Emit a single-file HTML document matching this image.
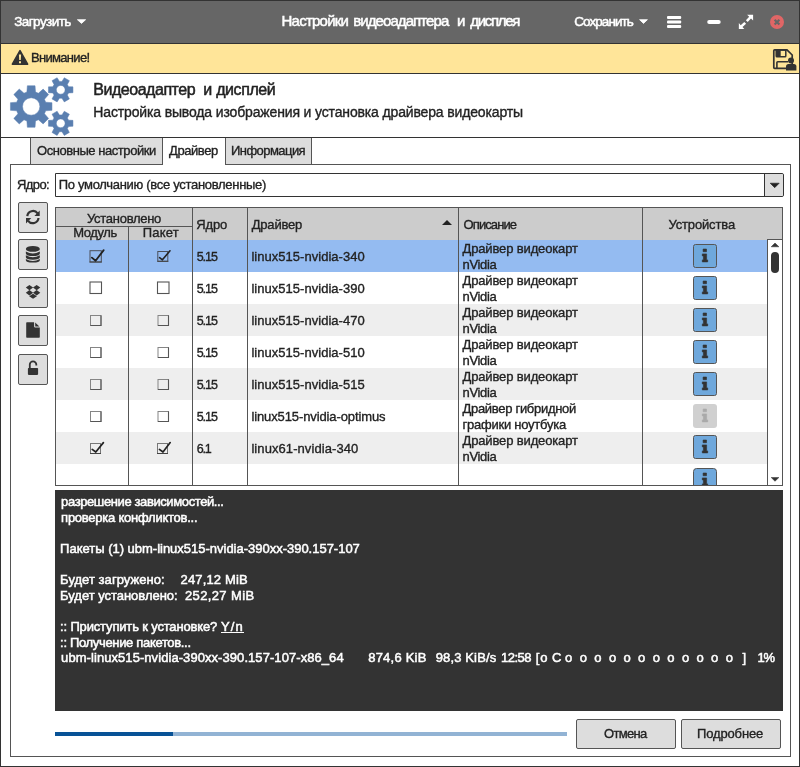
<!DOCTYPE html>
<html lang="ru">
<head>
<meta charset="utf-8">
<title>Настройки видеоадаптера и дисплея</title>
<style>
html,body{margin:0;padding:0;}
body{width:800px;height:767px;position:relative;overflow:hidden;background:#fff;font-family:"Liberation Sans",sans-serif;}
.a{position:absolute;box-sizing:border-box;}
.t{position:absolute;white-space:nowrap;font-family:"Liberation Sans",sans-serif;-webkit-text-stroke:0.35px;}
#txt{position:absolute;left:0;top:0;width:800px;height:767px;will-change:transform;}
.win{left:0;top:0;width:800px;height:767px;border:1px solid #333;}
.titlebar{left:1px;top:1px;width:798px;height:42px;background:#666;}
.hl{background:#333;height:1px;left:1px;width:798px;}
.warn{left:1px;top:44px;width:798px;height:29px;background:#ffe599;}
.tab{top:138px;height:27px;background:#ddd;border:1px solid #555;border-top:none;}
.panel{left:10px;top:164px;width:781px;height:593px;border:1px solid #555;}
.combo{left:55px;top:173px;width:729px;height:24px;border:1px solid #333;background:#fff;border-radius:0 2px 2px 0;}
.combobtn{left:764px;top:174px;width:19px;height:22px;background:#ddd;border-left:1px solid #333;border-radius:0 2px 2px 0;}
.tb{left:18px;width:30px;height:31px;background:#ddd;border:1px solid #555;border-radius:2px;}
.btn{top:719px;height:30px;background:#ddd;border:1px solid #555;border-radius:2px;}
.term{left:55px;top:490px;width:728px;height:221px;background:#333;}
.row{left:56px;width:711px;height:32px;}
.vl{background:#555;width:1px;}
</style>
</head>
<body>
<div class="a titlebar"></div>
<div class="a hl" style="top:43px"></div>
<div class="a warn"></div>
<div class="a hl" style="top:73px"></div>
<div class="a hl" style="top:137px"></div>

<!-- tabs & panel -->
<div class="a panel"></div>
<div class="a tab" style="left:30px;width:133px;"></div>
<div class="a tab" style="left:162px;width:64px;background:#fff;border-bottom:none;height:27px;"></div>
<div class="a tab" style="left:225px;width:87px;"></div>

<!-- combo -->
<div class="a combo"></div>
<div class="a combobtn"></div>
<svg class="a" style="left:769px;top:182px" width="12" height="8"><path d="M1.2 1.2H10.2L5.7 5.7Z" fill="#222" stroke="#222" stroke-width="0.6" stroke-linejoin="round"/></svg>

<!-- toolbar -->
<div class="a tb" style="top:202px"></div>
<div class="a tb" style="top:239px"></div>
<div class="a tb" style="top:277px"></div>
<div class="a tb" style="top:315px"></div>
<div class="a tb" style="top:354px"></div>

<!-- table -->
<div class="a" id="table" style="left:55px;top:207px;width:728px;height:279px;border:1px solid #555;background:#fff;overflow:hidden;"></div>
<div class="a" style="left:56px;top:208px;width:726px;height:32px;background:#ccc;"></div>
<div class="a row" style="top:240px;background:#94bbf1;"></div>
<div class="a row" style="top:304px;background:#eee;"></div>
<div class="a row" style="top:368px;background:#eee;"></div>
<div class="a row" style="top:432px;background:#eee;"></div>
<div class="a" style="left:56px;top:226px;width:137px;height:1px;background:#555;"></div>
<div class="a vl" style="left:128px;top:227px;height:258px;"></div>
<div class="a vl" style="left:192px;top:208px;height:277px;"></div>
<div class="a vl" style="left:247px;top:208px;height:277px;"></div>
<div class="a vl" style="left:458px;top:208px;height:277px;"></div>
<div class="a vl" style="left:642px;top:208px;height:277px;"></div>
<div class="a" style="left:767px;top:239px;width:15px;height:246px;background:#fff;border-left:1px solid #555;border-top:1px solid #555;"></div>
<svg class="a" style="left:442px;top:220px" width="10" height="5"><path d="M0 5H10L5 0Z" fill="#222"/></svg>
<svg class="a" style="left:0;top:0" width="800" height="767" viewBox="0 0 800 767">
<defs><clipPath id="clipb"><rect x="690" y="464" width="30" height="21"/></clipPath></defs>
<rect x="90.0" y="250.7" width="11.3" height="11.3" fill="none" stroke="#4a4f5a" stroke-width="1"/><path d="M89.5 262.0H101.8" stroke="#444" stroke-width="1"/>
<path d="M91.9 257.6 L95.6 260.7 L103.7 250.1" fill="none" stroke="#222" stroke-width="1.8" stroke-linejoin="round" stroke-linecap="round"/>
<rect x="157.8" y="251.5" width="10" height="9.8" fill="none" stroke="#4a4f5a" stroke-width="1"/><path d="M157.3 261.3H168.3" stroke="#444" stroke-width="1"/>
<path d="M159.6 257.7 L162.4 259.8 L170 250.8" fill="none" stroke="#222" stroke-width="1.6" stroke-linejoin="round" stroke-linecap="round"/>
<rect x="693.5" y="244.5" width="23" height="23" rx="2" fill="#6fa8dc" stroke="#555"/>
<path d="M703.1 249H706.5V251.7H703.1Z M702.3 253.9H706.6V259.9H707.7V261.9H702.3V259.9H703.4V255.9H702.3Z" fill="#333" stroke="#333" stroke-width="0.6" stroke-linejoin="round"/>
<rect x="90.0" y="282" width="11.5" height="11.5" fill="#fff" stroke="#555" stroke-width="1.1"/>
<rect x="157.5" y="282" width="11.5" height="11.5" fill="#fff" stroke="#555" stroke-width="1.1"/>
<rect x="693.5" y="276.5" width="23" height="23" rx="2" fill="#6fa8dc" stroke="#555"/>
<path d="M703.1 281H706.5V283.7H703.1Z M702.3 285.9H706.6V291.9H707.7V293.9H702.3V291.9H703.4V287.9H702.3Z" fill="#333" stroke="#333" stroke-width="0.6" stroke-linejoin="round"/>
<rect x="90.5" y="315.5" width="10.5" height="10" fill="none" stroke="#858585" stroke-width="1"/><path d="M101.0 315.5V325.5H90.5" fill="none" stroke="#555" stroke-width="1.1"/>
<rect x="158" y="315.5" width="10.5" height="10" fill="none" stroke="#858585" stroke-width="1"/><path d="M168.5 315.5V325.5H158" fill="none" stroke="#555" stroke-width="1.1"/>
<rect x="693.5" y="308.5" width="23" height="23" rx="2" fill="#6fa8dc" stroke="#555"/>
<path d="M703.1 313H706.5V315.7H703.1Z M702.3 317.9H706.6V323.9H707.7V325.9H702.3V323.9H703.4V319.9H702.3Z" fill="#333" stroke="#333" stroke-width="0.6" stroke-linejoin="round"/>
<rect x="90.5" y="347.5" width="10.5" height="10" fill="none" stroke="#858585" stroke-width="1"/><path d="M101.0 347.5V357.5H90.5" fill="none" stroke="#555" stroke-width="1.1"/>
<rect x="158" y="347.5" width="10.5" height="10" fill="none" stroke="#858585" stroke-width="1"/><path d="M168.5 347.5V357.5H158" fill="none" stroke="#555" stroke-width="1.1"/>
<rect x="693.5" y="340.5" width="23" height="23" rx="2" fill="#6fa8dc" stroke="#555"/>
<path d="M703.1 345H706.5V347.7H703.1Z M702.3 349.9H706.6V355.9H707.7V357.9H702.3V355.9H703.4V351.9H702.3Z" fill="#333" stroke="#333" stroke-width="0.6" stroke-linejoin="round"/>
<rect x="90.5" y="379.5" width="10.5" height="10" fill="none" stroke="#858585" stroke-width="1"/><path d="M101.0 379.5V389.5H90.5" fill="none" stroke="#555" stroke-width="1.1"/>
<rect x="158" y="379.5" width="10.5" height="10" fill="none" stroke="#858585" stroke-width="1"/><path d="M168.5 379.5V389.5H158" fill="none" stroke="#555" stroke-width="1.1"/>
<rect x="693.5" y="372.5" width="23" height="23" rx="2" fill="#6fa8dc" stroke="#555"/>
<path d="M703.1 377H706.5V379.7H703.1Z M702.3 381.9H706.6V387.9H707.7V389.9H702.3V387.9H703.4V383.9H702.3Z" fill="#333" stroke="#333" stroke-width="0.6" stroke-linejoin="round"/>
<rect x="90.5" y="411.5" width="10.5" height="10" fill="none" stroke="#858585" stroke-width="1"/><path d="M101.0 411.5V421.5H90.5" fill="none" stroke="#555" stroke-width="1.1"/>
<rect x="158" y="411.5" width="10.5" height="10" fill="none" stroke="#858585" stroke-width="1"/><path d="M168.5 411.5V421.5H158" fill="none" stroke="#555" stroke-width="1.1"/>
<rect x="693" y="404" width="24" height="24" rx="3" fill="#d0d0d0"/>
<path d="M703.1 409H706.5V411.7H703.1Z M702.3 413.9H706.6V419.9H707.7V421.9H702.3V419.9H703.4V415.9H702.3Z" fill="#aaa" stroke="#aaa" stroke-width="0.6" stroke-linejoin="round"/>
<rect x="90.5" y="443.5" width="10" height="10" fill="none" stroke="#777" stroke-width="1"/><path d="M90 453.5H101" stroke="#444" stroke-width="1"/>
<path d="M92.2 449.4 L95.8 452.0 L103.4 442.6" fill="none" stroke="#222" stroke-width="1.7" stroke-linejoin="round" stroke-linecap="round"/>
<rect x="157.5" y="443.5" width="10" height="10" fill="none" stroke="#777" stroke-width="1"/><path d="M157 453.5H168" stroke="#444" stroke-width="1"/>
<path d="M159.4 449.4 L163 452.0 L170.2 442.6" fill="none" stroke="#222" stroke-width="1.7" stroke-linejoin="round" stroke-linecap="round"/>
<rect x="693.5" y="435.5" width="23" height="23" rx="2" fill="#6fa8dc" stroke="#555"/>
<path d="M703.1 440H706.5V442.7H703.1Z M702.3 444.9H706.6V450.9H707.7V452.9H702.3V450.9H703.4V446.9H702.3Z" fill="#333" stroke="#333" stroke-width="0.6" stroke-linejoin="round"/>
<path d="M693.5 485V471.5Q693.5 468.5 696.5 468.5H713.5Q716.5 468.5 716.5 471.5V485Z" fill="#6fa8dc"/><path d="M693.5 485V471.5Q693.5 468.5 696.5 468.5H713.5Q716.5 468.5 716.5 471.5V485" fill="none" stroke="#555"/>
<g clip-path="url(#clipb)"><path d="M703.1 473H706.5V475.7H703.1Z M702.3 477.9H706.6V483.9H707.7V485.9H702.3V483.9H703.4V479.9H702.3Z" fill="#333" stroke="#333" stroke-width="0.6" stroke-linejoin="round"/></g>
</svg>

<!-- terminal -->
<div class="a term"></div>

<!-- progress -->
<div class="a" style="left:55px;top:732px;width:512px;height:4px;background:#92b3d4;"></div>
<div class="a" style="left:55px;top:732px;width:118px;height:4px;background:#085296;"></div>

<!-- buttons -->
<div class="a btn" style="left:576px;width:100px;"></div>
<div class="a btn" style="left:681px;width:100px;"></div>

<svg class="a" style="left:0;top:0" width="800" height="767" viewBox="0 0 800 767"><path d="M35.49 92.02 L35.05 85.75 L27.35 85.75 L26.91 92.02 L23.99 93.23 L19.25 89.11 L13.81 94.55 L17.93 99.29 L16.72 102.21 L10.45 102.65 L10.45 110.35 L16.72 110.79 L17.93 113.71 L13.81 118.45 L19.25 123.89 L23.99 119.77 L26.91 120.98 L27.35 127.25 L35.05 127.25 L35.49 120.98 L38.41 119.77 L43.15 123.89 L48.59 118.45 L44.47 113.71 L45.68 110.79 L51.95 110.35 L51.95 102.65 L45.68 102.21 L44.47 99.29 L48.59 94.55 L43.15 89.11 L38.41 93.23Z M22.50 106.50 a8.7 8.7 0 1 0 17.4 0 a8.7 8.7 0 1 0 -17.4 0Z M68.61 92.92 L72.95 92.74 L72.95 86.86 L68.61 86.68 L67.35 84.51 L69.37 80.66 L64.28 77.72 L61.96 81.39 L59.44 81.39 L57.12 77.72 L52.03 80.66 L54.05 84.51 L52.79 86.68 L48.45 86.86 L48.45 92.74 L52.79 92.92 L54.05 95.09 L52.03 98.94 L57.12 101.88 L59.44 98.21 L61.96 98.21 L64.28 101.88 L69.37 98.94 L67.35 95.09Z M56.30 89.80 a4.4 4.4 0 1 0 8.8 0 a4.4 4.4 0 1 0 -8.8 0Z M68.61 126.42 L72.95 126.24 L72.95 120.36 L68.61 120.18 L67.35 118.01 L69.37 114.16 L64.28 111.22 L61.96 114.89 L59.44 114.89 L57.12 111.22 L52.03 114.16 L54.05 118.01 L52.79 120.18 L48.45 120.36 L48.45 126.24 L52.79 126.42 L54.05 128.59 L52.03 132.44 L57.12 135.38 L59.44 131.71 L61.96 131.71 L64.28 135.38 L69.37 132.44 L67.35 128.59Z M56.30 123.30 a4.4 4.4 0 1 0 8.8 0 a4.4 4.4 0 1 0 -8.8 0Z" fill="#5a7fb0" fill-rule="evenodd" stroke="#5a7fb0" stroke-width="0.5" stroke-linejoin="round"/>
<path d="M77.4 19.7H85.6L81.5 23.4Z M639.6 19.7H647.4L643.5 23.4Z" fill="#fff" stroke="#fff" stroke-width="0.8" stroke-linejoin="round"/>
<g fill="#fff"><rect x="667" y="16.1" width="14.2" height="3" rx="1"/><rect x="667" y="20.6" width="14.2" height="3" rx="1"/><rect x="667" y="25.1" width="14.2" height="3" rx="1"/>
<rect x="707.2" y="19.9" width="13.5" height="4.1" rx="2"/>
<path d="M753.1 14.85V20.6L751 18.6 747.7 22.1 745.9 20.3 749.2 16.8 747.1 14.85Z M738.85 29.1V23.1L740.7 25.2 744.3 21.9 746.1 23.7 742.5 27 744.3 29.1Z"/></g>
<circle cx="777" cy="22" r="7" fill="#e06666"/><path d="M774.6 19.7L779.4 24.5M779.4 19.7L774.6 24.5" stroke="#666" stroke-width="2.1"/>
<path d="M20 50.6L27.6 64.2H12.4Z" fill="#333" stroke="#333" stroke-width="1.6" stroke-linejoin="round"/><path d="M18.9 54.6H21.1L20.8 59.9H19.2Z M19 61.2H21V63.2H19Z" fill="#ffe599"/>
<path d="M774.6 49.9H787L792.2 55V67.5Q792.2 68.3 791.4 68.3H774.6Q773.8 68.3 773.8 67.5V50.7Q773.8 49.9 774.6 49.9Z" fill="none" stroke="#333" stroke-width="1.7"/><path d="M776.2 50H785.8V55.9Q785.8 56.7 785 56.7H777Q776.2 56.7 776.2 55.9Z" fill="none" stroke="#333" stroke-width="1.5"/><rect x="776.2" y="50" width="4.5" height="6.7" fill="#333"/><path d="M776.9 68V62.6Q776.9 61.8 777.7 61.8H788" fill="none" stroke="#333" stroke-width="1.6"/><circle cx="791" cy="60.4" r="3" fill="#333"/><path d="M786 70.6V66.5Q786 64 788.5 64H793.9Q796.4 64 796.4 66.5V70.6Z" fill="#333"/>
<g fill="none" stroke="#333" stroke-width="2.2"><path d="M27.3 216.2A5.7 5.7 0 0 1 37.6 213.4"/><path d="M38.5 218A5.7 5.7 0 0 1 28.2 220.8"/></g><path d="M39.7 210.6V216.1H34.4Z M26 223.6V218.1H31.3Z" fill="#333"/>
<g fill="#333"><ellipse cx="32.85" cy="248.9" rx="7" ry="2.95"/><path d="M25.85 251.6Q32.85 255.6 39.85 251.6V253.6Q39.85 256 32.85 256Q25.85 256 25.85 253.6Z"/><path d="M25.85 255.3Q32.85 259.3 39.85 255.3V257.3Q39.85 259.7 32.85 259.7Q25.85 259.7 25.85 257.3Z"/><path d="M25.85 259Q32.85 263 39.85 259V260.2Q39.85 262.6 32.85 262.6Q25.85 262.6 25.85 260.2Z"/></g>
<path d="M25.8 287.6L29.45 284.90000000000003L33.1 287.6L29.45 290.3ZM33.0 287.6L36.65 284.90000000000003L40.3 287.6L36.65 290.3ZM25.8 292.8L29.45 290.1L33.1 292.8L29.45 295.5ZM33.0 292.8L36.65 290.1L40.3 292.8L36.65 295.5ZM29.15 296.25L33.05 293.7L36.949999999999996 296.25L33.05 298.8Z" fill="#333"/>
<path d="M26.9 322.2H34.1V326.6Q34.1 327.4 34.9 327.4H39.8V337Q39.8 337.7 39.1 337.7H26.9Q26.2 337.7 26.2 337V322.9Q26.2 322.2 26.9 322.2Z M35.2 322.5L39.4 326.4H35.2Z" fill="#333"/>
<rect x="27.9" y="368" width="10.2" height="6.9" rx="0.8" fill="#333"/><path d="M29.8 368.5V364.6A3.25 3.25 0 0 1 36.3 364.6V365.6" fill="none" stroke="#333" stroke-width="1.8"/>
<path d="M771.2 246.8L775 243L778.9 246.8Z M771.2 477.5L775 481.3L778.9 477.5Z" fill="#333" stroke="#333" stroke-width="0.5" stroke-linejoin="round"/><rect x="771" y="252" width="8" height="21" rx="4" fill="#333"/>
</svg>
<div id="txt">
<span class="t" style="left:14.20px;top:15.00px;font-size:13.5px;line-height:13.5px;color:#fff;letter-spacing:-0.563px;-webkit-text-stroke:0.5px;">Загрузить</span>
<span class="t" style="left:281.50px;top:13.00px;font-size:15px;line-height:15px;color:#fff;letter-spacing:-0.759px;-webkit-text-stroke:0.5px;">Настройки</span>
<span class="t" style="left:353.20px;top:13.00px;font-size:15px;line-height:15px;color:#fff;letter-spacing:-0.911px;-webkit-text-stroke:0.5px;">видеоадаптера</span>
<span class="t" style="left:457.00px;top:13.00px;font-size:15px;line-height:15px;color:#fff;letter-spacing:0.000px;-webkit-text-stroke:0.5px;">и</span>
<span class="t" style="left:470.20px;top:13.00px;font-size:15px;line-height:15px;color:#fff;letter-spacing:-1.300px;-webkit-text-stroke:0.5px;">дисплея</span>
<span class="t" style="left:574.20px;top:15.00px;font-size:13.5px;line-height:13.5px;color:#fff;letter-spacing:-0.931px;-webkit-text-stroke:0.5px;">Сохранить</span>
<span class="t" style="left:31.00px;top:51.00px;font-size:13px;line-height:13px;color:#222;letter-spacing:-0.681px;">Внимание!</span>
<span class="t" style="left:93.30px;top:82.00px;font-size:16px;line-height:16px;color:#222;letter-spacing:-0.471px;-webkit-text-stroke:0.5px;">Видеоадаптер</span>
<span class="t" style="left:203.30px;top:82.00px;font-size:16px;line-height:16px;color:#222;letter-spacing:0.000px;-webkit-text-stroke:0.5px;">и</span>
<span class="t" style="left:216.20px;top:82.00px;font-size:16px;line-height:16px;color:#222;letter-spacing:-0.429px;-webkit-text-stroke:0.5px;">дисплей</span>
<span class="t" style="left:93.30px;top:105.00px;font-size:14px;line-height:14px;color:#222;letter-spacing:-0.147px;">Настройка вывода изображения и установка драйвера видеокарты</span>
<span class="t" style="left:37.00px;top:144.00px;font-size:13px;line-height:13px;color:#222;letter-spacing:-0.445px;">Основные настройки</span>
<span class="t" style="left:169.00px;top:144.00px;font-size:13px;line-height:13px;color:#222;letter-spacing:-0.419px;">Драйвер</span>
<span class="t" style="left:231.00px;top:144.00px;font-size:13px;line-height:13px;color:#222;letter-spacing:-0.550px;">Информация</span>
<span class="t" style="left:17.00px;top:178.00px;font-size:13px;line-height:13px;color:#222;letter-spacing:-0.608px;">Ядро:</span>
<span class="t" style="left:58.70px;top:178.00px;font-size:13px;line-height:13px;color:#222;letter-spacing:-0.300px;">По умолчанию (все установленные)</span>
<span class="t" style="left:87.00px;top:212.00px;font-size:13px;line-height:13px;color:#222;letter-spacing:-0.284px;">Установлено</span>
<span class="t" style="left:73.25px;top:226.00px;font-size:13px;line-height:13px;color:#222;letter-spacing:-0.411px;">Модуль</span>
<span class="t" style="left:142.75px;top:226.00px;font-size:13px;line-height:13px;color:#222;letter-spacing:0.199px;">Пакет</span>
<span class="t" style="left:196.25px;top:218.00px;font-size:13px;line-height:13px;color:#222;letter-spacing:-0.151px;">Ядро</span>
<span class="t" style="left:251.75px;top:218.00px;font-size:13px;line-height:13px;color:#222;letter-spacing:-0.211px;">Драйвер</span>
<span class="t" style="left:463.60px;top:218.00px;font-size:13px;line-height:13px;color:#222;letter-spacing:-0.912px;">Описание</span>
<span class="t" style="left:668.40px;top:218.00px;font-size:13px;line-height:13px;color:#222;letter-spacing:-0.142px;">Устройства</span>
<span class="t" style="left:196.70px;top:251.00px;font-size:12.5px;line-height:12.5px;color:#222;letter-spacing:-1.059px;">5.15</span>
<span class="t" style="left:251.40px;top:250.00px;font-size:13px;line-height:13px;color:#222;letter-spacing:0.033px;">linux515-nvidia-340</span>
<span class="t" style="left:462.50px;top:242.00px;font-size:13px;line-height:13px;color:#222;letter-spacing:-0.139px;">Драйвер видеокарт</span>
<span class="t" style="left:462.50px;top:258.00px;font-size:13px;line-height:13px;color:#222;letter-spacing:-0.334px;">nVidia</span>
<span class="t" style="left:196.70px;top:283.00px;font-size:12.5px;line-height:12.5px;color:#222;letter-spacing:-1.059px;">5.15</span>
<span class="t" style="left:251.40px;top:282.00px;font-size:13px;line-height:13px;color:#222;letter-spacing:0.033px;">linux515-nvidia-390</span>
<span class="t" style="left:462.50px;top:274.00px;font-size:13px;line-height:13px;color:#222;letter-spacing:-0.139px;">Драйвер видеокарт</span>
<span class="t" style="left:462.50px;top:290.00px;font-size:13px;line-height:13px;color:#222;letter-spacing:-0.334px;">nVidia</span>
<span class="t" style="left:196.70px;top:315.00px;font-size:12.5px;line-height:12.5px;color:#222;letter-spacing:-1.059px;">5.15</span>
<span class="t" style="left:251.40px;top:314.00px;font-size:13px;line-height:13px;color:#222;letter-spacing:0.033px;">linux515-nvidia-470</span>
<span class="t" style="left:462.50px;top:306.00px;font-size:13px;line-height:13px;color:#222;letter-spacing:-0.139px;">Драйвер видеокарт</span>
<span class="t" style="left:462.50px;top:322.00px;font-size:13px;line-height:13px;color:#222;letter-spacing:-0.334px;">nVidia</span>
<span class="t" style="left:196.70px;top:347.00px;font-size:12.5px;line-height:12.5px;color:#222;letter-spacing:-1.059px;">5.15</span>
<span class="t" style="left:251.40px;top:346.00px;font-size:13px;line-height:13px;color:#222;letter-spacing:0.033px;">linux515-nvidia-510</span>
<span class="t" style="left:462.50px;top:338.00px;font-size:13px;line-height:13px;color:#222;letter-spacing:-0.139px;">Драйвер видеокарт</span>
<span class="t" style="left:462.50px;top:354.00px;font-size:13px;line-height:13px;color:#222;letter-spacing:-0.334px;">nVidia</span>
<span class="t" style="left:196.70px;top:379.00px;font-size:12.5px;line-height:12.5px;color:#222;letter-spacing:-1.059px;">5.15</span>
<span class="t" style="left:251.40px;top:378.00px;font-size:13px;line-height:13px;color:#222;letter-spacing:0.033px;">linux515-nvidia-515</span>
<span class="t" style="left:462.50px;top:370.00px;font-size:13px;line-height:13px;color:#222;letter-spacing:-0.139px;">Драйвер видеокарт</span>
<span class="t" style="left:462.50px;top:386.00px;font-size:13px;line-height:13px;color:#222;letter-spacing:-0.334px;">nVidia</span>
<span class="t" style="left:196.70px;top:411.00px;font-size:12.5px;line-height:12.5px;color:#222;letter-spacing:-1.059px;">5.15</span>
<span class="t" style="left:251.40px;top:410.00px;font-size:13px;line-height:13px;color:#222;letter-spacing:-0.112px;">linux515-nvidia-optimus</span>
<span class="t" style="left:462.50px;top:402.00px;font-size:13px;line-height:13px;color:#222;letter-spacing:-0.300px;">Драйвер гибридной</span>
<span class="t" style="left:462.50px;top:418.00px;font-size:13px;line-height:13px;color:#222;letter-spacing:-0.238px;">графики ноутбука</span>
<span class="t" style="left:196.70px;top:443.00px;font-size:12.5px;line-height:12.5px;color:#222;letter-spacing:-1.212px;">6.1</span>
<span class="t" style="left:251.40px;top:442.00px;font-size:13px;line-height:13px;color:#222;letter-spacing:0.078px;">linux61-nvidia-340</span>
<span class="t" style="left:462.50px;top:434.00px;font-size:13px;line-height:13px;color:#222;letter-spacing:-0.139px;">Драйвер видеокарт</span>
<span class="t" style="left:462.50px;top:450.00px;font-size:13px;line-height:13px;color:#222;letter-spacing:-0.334px;">nVidia</span>
<span class="t" style="left:61.10px;top:495.00px;font-size:13px;line-height:13px;color:#fff;letter-spacing:-0.391px;-webkit-text-stroke:0.5px;">разрешение зависимостей...</span>
<span class="t" style="left:61.10px;top:511.00px;font-size:13px;line-height:13px;color:#fff;letter-spacing:-0.245px;-webkit-text-stroke:0.5px;">проверка конфликтов...</span>
<span class="t" style="left:60.10px;top:542.00px;font-size:13px;line-height:13px;color:#fff;letter-spacing:-0.012px;-webkit-text-stroke:0.5px;">Пакеты (1) ubm-linux515-nvidia-390xx-390.157-107</span>
<span class="t" style="left:60.10px;top:573.00px;font-size:13px;line-height:13px;color:#fff;letter-spacing:0.043px;-webkit-text-stroke:0.5px;">Будет загружено:</span>
<span class="t" style="left:180.50px;top:573.00px;font-size:13px;line-height:13px;color:#fff;letter-spacing:0.157px;-webkit-text-stroke:0.5px;">247,12 MiB</span>
<span class="t" style="left:60.10px;top:589.00px;font-size:13px;line-height:13px;color:#fff;letter-spacing:-0.029px;-webkit-text-stroke:0.5px;">Будет установлено:</span>
<span class="t" style="left:185.00px;top:589.00px;font-size:13px;line-height:13px;color:#fff;letter-spacing:0.368px;-webkit-text-stroke:0.5px;">252,27 MiB</span>
<span class="t" style="left:60.10px;top:620.00px;font-size:13px;line-height:13px;color:#fff;letter-spacing:-0.163px;-webkit-text-stroke:0.5px;">:: Приступить к установке?</span>
<span class="t" style="left:221.00px;top:620.00px;font-size:13px;line-height:13px;color:#fff;letter-spacing:1.159px;-webkit-text-stroke:0.5px;text-decoration:underline;">Y/n</span>
<span class="t" style="left:60.10px;top:636.00px;font-size:13px;line-height:13px;color:#fff;letter-spacing:-0.330px;-webkit-text-stroke:0.5px;">:: Получение пакетов...</span>
<span class="t" style="left:61.10px;top:651.00px;font-size:13px;line-height:13px;color:#fff;letter-spacing:0.066px;-webkit-text-stroke:0.5px;">ubm-linux515-nvidia-390xx-390.157-107-x86_64</span>
<span class="t" style="left:368.20px;top:651.00px;font-size:13px;line-height:13px;color:#fff;letter-spacing:0.225px;-webkit-text-stroke:0.5px;">874,6 KiB</span>
<span class="t" style="left:435.70px;top:651.00px;font-size:13px;line-height:13px;color:#fff;letter-spacing:0.138px;-webkit-text-stroke:0.5px;">98,3 KiB/s</span>
<span class="t" style="left:501.00px;top:651.00px;font-size:13px;line-height:13px;color:#fff;letter-spacing:-0.525px;-webkit-text-stroke:0.5px;">12:58</span>
<span class="t" style="left:535.80px;top:651.00px;font-size:13px;line-height:13px;color:#fff;letter-spacing:0.788px;-webkit-text-stroke:0.5px;">[o</span>
<span class="t" style="left:552.00px;top:651.00px;font-size:13px;line-height:13px;color:#fff;letter-spacing:0.000px;-webkit-text-stroke:0.5px;">C</span>
<span class="t" style="left:565.10px;top:651.00px;font-size:13px;line-height:13px;color:#fff;letter-spacing:0.000px;-webkit-text-stroke:0.5px;">o</span>
<span class="t" style="left:579.70px;top:651.00px;font-size:13px;line-height:13px;color:#fff;letter-spacing:0.000px;-webkit-text-stroke:0.5px;">o</span>
<span class="t" style="left:594.30px;top:651.00px;font-size:13px;line-height:13px;color:#fff;letter-spacing:0.000px;-webkit-text-stroke:0.5px;">o</span>
<span class="t" style="left:608.90px;top:651.00px;font-size:13px;line-height:13px;color:#fff;letter-spacing:0.000px;-webkit-text-stroke:0.5px;">o</span>
<span class="t" style="left:623.50px;top:651.00px;font-size:13px;line-height:13px;color:#fff;letter-spacing:0.000px;-webkit-text-stroke:0.5px;">o</span>
<span class="t" style="left:638.10px;top:651.00px;font-size:13px;line-height:13px;color:#fff;letter-spacing:0.000px;-webkit-text-stroke:0.5px;">o</span>
<span class="t" style="left:652.70px;top:651.00px;font-size:13px;line-height:13px;color:#fff;letter-spacing:0.000px;-webkit-text-stroke:0.5px;">o</span>
<span class="t" style="left:667.30px;top:651.00px;font-size:13px;line-height:13px;color:#fff;letter-spacing:0.000px;-webkit-text-stroke:0.5px;">o</span>
<span class="t" style="left:681.90px;top:651.00px;font-size:13px;line-height:13px;color:#fff;letter-spacing:0.000px;-webkit-text-stroke:0.5px;">o</span>
<span class="t" style="left:696.50px;top:651.00px;font-size:13px;line-height:13px;color:#fff;letter-spacing:0.000px;-webkit-text-stroke:0.5px;">o</span>
<span class="t" style="left:711.10px;top:651.00px;font-size:13px;line-height:13px;color:#fff;letter-spacing:0.000px;-webkit-text-stroke:0.5px;">o</span>
<span class="t" style="left:725.70px;top:651.00px;font-size:13px;line-height:13px;color:#fff;letter-spacing:0.000px;-webkit-text-stroke:0.5px;">o</span>
<span class="t" style="left:742.50px;top:651.00px;font-size:13px;line-height:13px;color:#fff;letter-spacing:0.000px;-webkit-text-stroke:0.5px;">]</span>
<span class="t" style="left:757.50px;top:651.00px;font-size:13px;line-height:13px;color:#fff;letter-spacing:-1.300px;-webkit-text-stroke:0.5px;">1%</span>
<span class="t" style="left:604.00px;top:727.00px;font-size:13px;line-height:13px;color:#222;letter-spacing:-0.683px;">Отмена</span>
<span class="t" style="left:697.00px;top:727.00px;font-size:13px;line-height:13px;color:#222;letter-spacing:-0.149px;">Подробнее</span>
</div>
<div class="a win"></div>
</body>
</html>
